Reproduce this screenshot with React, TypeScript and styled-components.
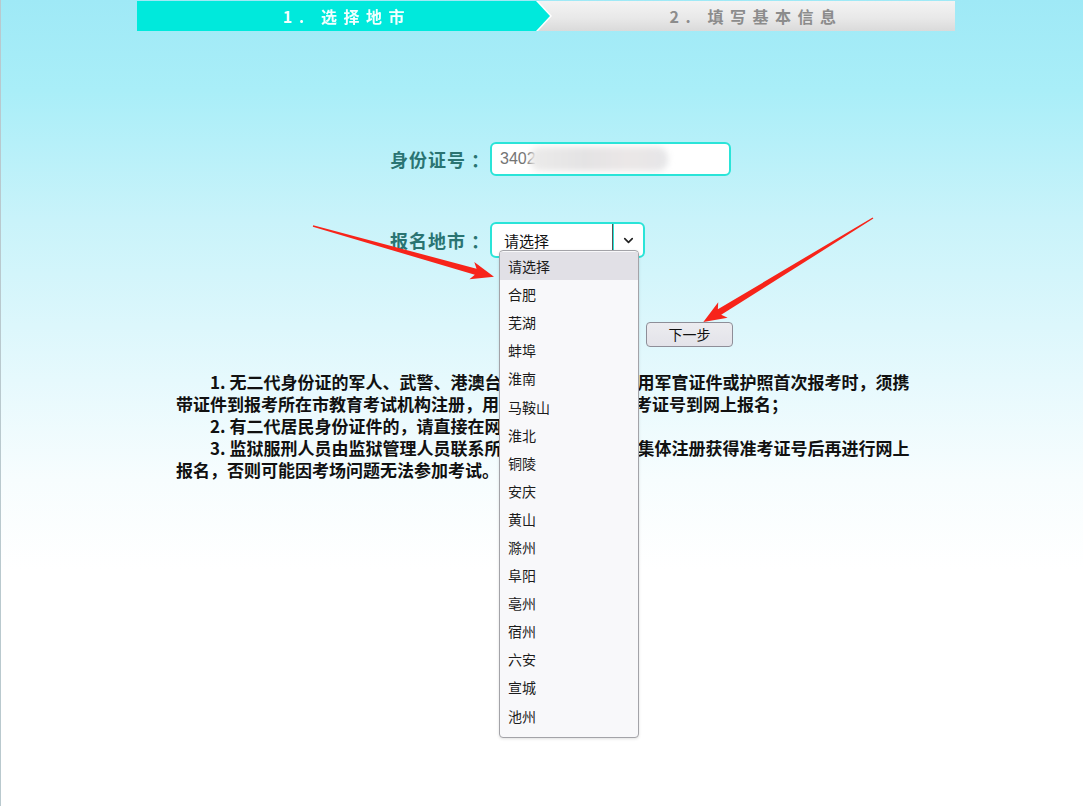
import React from 'react';
import styled, { createGlobalStyle } from 'styled-components';
import { ChevronDown } from 'lucide-react';

const GlobalStyle = createGlobalStyle`
  html, body {
    margin: 0;
    padding: 0;
  }
  body {
    font-family: "Noto Sans CJK SC", "Liberation Sans", sans-serif;
  }
`;

/*** PAGE ***/
const Screen = styled.div`
  position: relative;
  min-height: 100vh;
  box-sizing: border-box;
  border-left: 1px solid #b9c9ce;
  background: linear-gradient(180deg, #9fe9f6 0px, #a9eef8 90px, #c9f3fa 220px, #e6f9fd 380px, #f7fdfe 480px, #ffffff 570px);
  overflow: hidden;
`;

const Page = styled.div`
  width: 818px;
  margin-left: calc(50% - 405px);
  padding-top: 1px;
`;

/*** STEPS ***/
const StepBar = styled.div`
  display: flex;
  height: 30px;
  background: linear-gradient(180deg, #f3f3f3 0%, #e9e9e9 55%, #dadada 100%);
`;

const StepOutline = styled.div`
  filter: drop-shadow(2px 0 0 #ffffff);
`;

const StepActive = styled.div`
  width: 413px;
  height: 30px;
  background: #00e9dc;
  clip-path: polygon(0 0, calc(100% - 14px) 0, 100% 50%, calc(100% - 14px) 100%, 0 100%);
  display: flex;
  align-items: center;
  justify-content: center;
`;

const StepIdle = styled.div`
  flex: 1;
  display: flex;
  align-items: center;
  justify-content: center;
`;

const StepText = styled.span<{ active?: boolean }>`
  font-family: "Noto Sans CJK SC", sans-serif;
  font-size: 16px;
  font-weight: 700;
  letter-spacing: 6.5px;
  color: ${(p) => (p.active ? '#f4fffe' : '#8c8c8c')};
  padding-left: 7px;
`;

/*** FORM ***/
const Form = styled.div`
  display: flex;
  flex-direction: column;
  margin-left: 253px;
  margin-top: 111px;
`;

const Row = styled.div<{ gap: number }>`
  display: flex;
  align-items: center;
  margin-bottom: ${(p) => p.gap}px;
`;

const Label = styled.div`
  width: 100px;
  font-size: 18px;
  font-weight: 700;
  letter-spacing: 1px;
  color: #2a7472;
  white-space: pre;
`;

const InputBox = styled.div`
  width: 241px;
  height: 34px;
  box-sizing: border-box;
  border: 2px solid #2ae4d8;
  border-radius: 6px;
  background: #ffffff;
  display: flex;
  align-items: center;
  padding-left: 8px;
  font-family: "Liberation Sans", sans-serif;
  font-size: 16px;
  color: #747474;
  overflow: hidden;
`;

const Redacted = styled.span`
  display: inline-block;
  width: 138px;
  height: 24px;
  margin-left: -6px;
  background: linear-gradient(90deg, #ecebea, #e4e3e4 40%, #ebe7e7 70%, #e6e6e8);
  filter: blur(3px);
  border-radius: 10px;
`;

const SelectWrap = styled.div`
  position: relative;
  display: flex;
  width: 155px;
  height: 36px;
  box-sizing: border-box;
  border: 2px solid #2ae4d8;
  border-radius: 6px;
  background: #ffffff;
`;

const SelectValue = styled.div`
  flex: 1;
  display: flex;
  align-items: center;
  padding-left: 12px;
  font-size: 15px;
  color: #111;
  border-right: 1px solid #555;
  box-shadow: 1px 0 0 #2ae4d8;
`;

const SelectArrow = styled.div`
  width: 29px;
  display: flex;
  align-items: center;
  justify-content: center;
  color: #222;
  padding-left: 1px;
`;

const OptionList = styled.ul`
  position: absolute;
  left: 7px;
  top: 26px;
  width: 140px;
  height: 488px;
  box-sizing: border-box;
  margin: 0;
  padding: 1px 0 0;
  list-style: none;
  background: #f8f8fa;
  border: 1px solid #a3a3a8;
  border-radius: 4px;
  box-shadow: 0 1px 3px rgba(0, 0, 0, 0.12);
  z-index: 5;
`;

const Option = styled.li<{ selected?: boolean }>`
  height: 28.1px;
  display: flex;
  align-items: center;
  padding-left: 8px;
  font-size: 14px;
  color: #1c1c1c;
  background: ${(p) => (p.selected ? '#e1e0e6' : 'transparent')};
`;

const NextButton = styled.button`
  width: 87px;
  height: 25px;
  margin-left: 256px;
  padding: 0;
  border: 1px solid #8e8e98;
  border-radius: 4px;
  background: linear-gradient(180deg, #ececf0, #e3e3e9);
  font-family: "Noto Sans CJK SC", sans-serif;
  font-size: 14px;
  color: #111;
  cursor: pointer;
`;

/*** NOTES ***/
const Notes = styled.div`
  width: 740px;
  margin: 24px 0 0 39px;
  font-size: 17px;
  font-weight: 700;
  line-height: 22px;
  color: #111;
`;

const Note = styled.p`
  margin: 0;
  text-indent: 2em;
`;

/*** ANNOTATION ***/
const Overlay = styled.svg`
  position: absolute;
  left: 0;
  top: 0;
  width: 1083px;
  height: 806px;
  pointer-events: none;
  z-index: 10;
`;

const cities = ['请选择', '合肥', '芜湖', '蚌埠', '淮南', '马鞍山', '淮北', '铜陵', '安庆', '黄山', '滁州', '阜阳', '亳州', '宿州', '六安', '宣城', '池州'];

const Arrow = ({ x, y, angle, length }: { x: number; y: number; angle: number; length: number }) => {
  const L = length;
  const pts = `0,-0.7 ${L - 19},-3.2 ${L - 23},-9 ${L},0 ${L - 23},9 ${L - 19},3.2 0,0.7`;
  return (
    <g transform={`translate(${x} ${y}) rotate(${angle})`}>
      <polygon points={pts} fill="#f7241a" />
    </g>
  );
};

export default function App() {
  return (
    <Screen>
      <GlobalStyle />
      <Page>
        <StepBar>
          <StepOutline>
            <StepActive>
              <StepText active>1. 选择地市</StepText>
            </StepActive>
          </StepOutline>
          <StepIdle>
            <StepText>2. 填写基本信息</StepText>
          </StepIdle>
        </StepBar>

        <Form>
          <Row gap={46}>
            <Label>身份证号 ：</Label>
            <InputBox>
              3402<Redacted />
            </InputBox>
          </Row>
          <Row gap={63}>
            <Label>报名地市 ：</Label>
            <SelectWrap>
              <SelectValue>请选择</SelectValue>
              <SelectArrow>
                <ChevronDown size={15} strokeWidth={2.6} />
              </SelectArrow>
              <OptionList>
                {cities.map((c, i) => (
                  <Option key={c} selected={i === 0}>{c}</Option>
                ))}
              </OptionList>
            </SelectWrap>
          </Row>
          <div>
            <NextButton>下一步</NextButton>
          </div>
        </Form>

        <Notes>
          <Note>1. 无二代身份证的军人、武警、港澳台同胞、外籍人员使用军官证件或护照首次报考时，须携带证件到报考所在市教育考试机构注册，用注册后所获得的准考证号到网上报名；</Note>
          <Note>2. 有二代居民身份证件的，请直接在网上报名。</Note>
          <Note>3. 监狱服刑人员由监狱管理人员联系所在市教育考试机构集体注册获得准考证号后再进行网上报名，否则可能因考场问题无法参加考试。</Note>
        </Notes>
      </Page>

      <Overlay viewBox="0 0 1083 806">
        <Arrow x={312} y={226} angle={15.7} length={188} />
        <Arrow x={872} y={218} angle={148.5} length={199} />
      </Overlay>
    </Screen>
  );
}
